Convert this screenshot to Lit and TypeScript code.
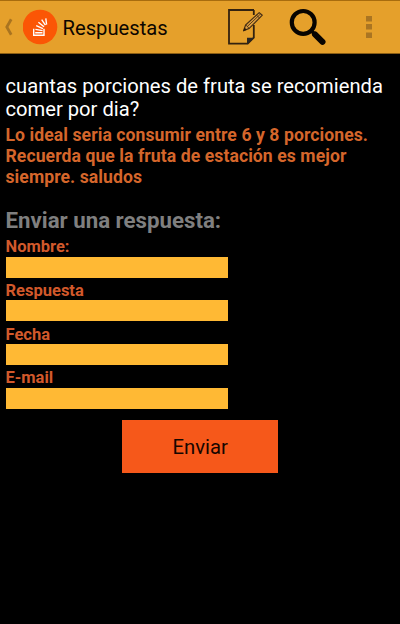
import { LitElement, html, css, svg } from "lit";
import { customElement } from "lit/decorators.js";

@customElement("app-bar")
class AppBar extends LitElement {
  static styles = css`
    :host {
      display: flex;
      align-items: center;
      box-sizing: border-box;
      height: 54px;
      background: #e5a02b;
      border-top: 1px solid #a86c0e;
      border-bottom: 1px solid #8a5d14;
      color: #0c0600;
    }
    svg { display: block; flex: none; }
    .back { width: 23px; }
    .logo { width: 35px; }
    .title {
      margin-left: 4.5px;
      padding-top: 2px;
      font-size: 20.2px;
      line-height: 26px;
      flex: 1;
      white-space: nowrap;
    }
    .note { width: 36px; margin-right: 25px; }
    .search { width: 38px; margin-right: 38px; }
    .more { width: 8px; margin-right: 27px; }
  `;
  render() {
    return html`
      <svg class="back" width="23" height="52" viewBox="0 1 23 52">
        <path d="M11.2 19.3 L6.8 27 L11.2 34.7" fill="none" stroke="#a97420" stroke-width="2.8" />
      </svg>
      <svg class="logo" width="35" height="52" viewBox="23 1 35 52">
        <circle cx="40" cy="27" r="17.3" fill="#fb5605" />
        <g fill="none" stroke="#fff" stroke-width="1.4">
          <path d="M33.7 28.8 V35.2 H44 V28.8" />
          <path d="M35.2 32.8 H42.5 M35.4 29.4 L42.6 30.6 M36.2 25.7 L42.9 28.6 M38.4 22.2 L44 26.8 M41.7 19.6 L45.4 25.2 M45.8 18.3 L46.6 24.6" />
        </g>
      </svg>
      <span class="title">Respuestas</span>
      <svg class="note" width="36" height="52" viewBox="227 1 36 52">
        <path d="M253 10 H228 V43.6 H246.7 L252.8 37.6 V25 M252.8 10 V15" fill="none" stroke="#33220f" stroke-width="1.8" />
        <path d="M246 44.2 V37.8 H253.3 Z" fill="#2b2621" />
        <path d="M242.6 30.8 L244.6 25 L258.2 12.6 L261.3 15.2 L248.2 28.4 Z" fill="#dfa040" stroke="#493014" stroke-width="1.2" stroke-linejoin="round" />
        <path d="M246.2 26.6 L259.6 13.9 M244.8 25 L248.2 28.4 M255.4 15.2 L258.6 18" stroke="#493014" stroke-width=".9" />
        <path d="M242.2 31.2 L243.5 27.6 L245.9 29.7 Z" fill="#2b1b0a" />
      </svg>
      <svg class="search" width="38" height="52" viewBox="288 1 38 52">
        <circle cx="302.2" cy="22.4" r="11.4" fill="none" stroke="#080400" stroke-width="4.2" />
        <path d="M310 30.5 L314 34.5" stroke="#080400" stroke-width="3.4" />
        <path d="M314 34.4 L321.5 41.9" stroke="#080400" stroke-width="6" stroke-linecap="round" />
      </svg>
      <svg class="more" width="8" height="52" viewBox="365 1 8 52">
        ${[16, 24, 32.5].map((y) => svg`<rect x="366" y=${y} width="6" height="5.5" fill="#aa7522" />`)}
      </svg>
    `;
  }
}

@customElement("app-root")
class AppRoot extends LitElement {
  static styles = css`
    :host {
      display: block;
      box-sizing: border-box;
      height: 624px;
      overflow: hidden;
      background: #000;
      font-family: Roboto, "Liberation Sans", sans-serif;
    }
    main { padding: 21px 6px 0 5.5px; }
    p, h2 { margin: 0; white-space: nowrap; }
    .question { color: #fff; font-size: 20.18px; line-height: 23px; }
    .answer { margin-top: 4px; color: #d5662b; font-size: 17.6px; line-height: 21px; font-weight: 700; letter-spacing: 0.07px; }
    .heading { margin: 19px 0 1px; color: #7f7f7f; font-size: 22.25px; line-height: 26px; font-weight: 700; }
    .field { display: block; height: 43.75px; }
    .label { display: block; height: 22.5px; color: #d2592b; font-size: 16.5px; line-height: 26px; font-weight: 700; }
    .input {
      display: block;
      box-sizing: border-box;
      width: 222px;
      height: 21px;
      margin: 0;
      padding: 0 4px;
      border: 0;
      border-radius: 0;
      background: #ffb934;
    }
    .send {
      display: block;
      width: 156px;
      height: 53px;
      margin: 11px auto 0;
      padding: 2px 0 0 1px;
      border: 0;
      background: #f6581a;
      color: #160600;
      font: 20.3px/51px Roboto, sans-serif;
    }
  `;
  render() {
    return html`
      <app-bar></app-bar>
      <main>
        <p class="question">cuantas porciones de fruta se recomienda<br />comer por dia?</p>
        <p class="answer">Lo ideal seria consumir entre 6 y 8 porciones.<br />Recuerda que la fruta de estación es mejor<br />siempre. saludos</p>
        <h2 class="heading">Enviar una respuesta:</h2>
        ${["Nombre:", "Respuesta", "Fecha", "E-mail"].map(
          (name) => html`<label class="field"><span class="label">${name}</span><input class="input" /></label>`
        )}
        <button class="send">Enviar</button>
      </main>
    `;
  }
}
